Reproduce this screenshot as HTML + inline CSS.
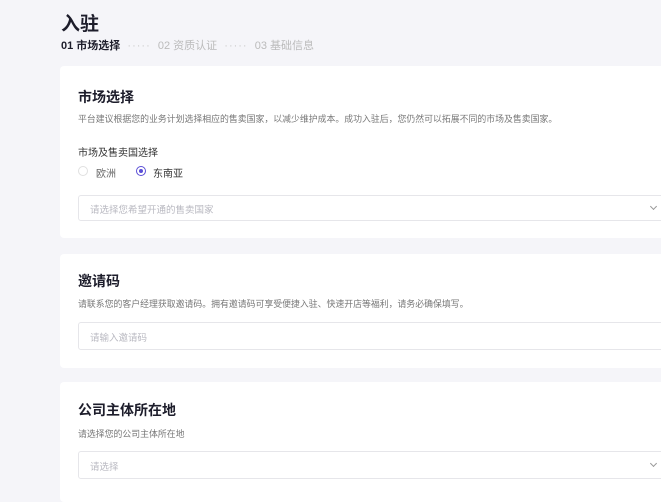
<!DOCTYPE html>
<html><head><meta charset="utf-8"><style>
body{margin:0;width:661px;height:488px;overflow:hidden;background:#f5f5f9;font-family:"Liberation Sans","Noto Sans CJK SC",sans-serif;position:relative}
.a{position:absolute;white-space:nowrap}
.card{position:absolute;left:60px;width:620px;background:#fff;border-radius:4px}
.h{font-size:14px;font-weight:bold;color:#1d1d2b}
.d{font-size:8.9px;color:#777}
.box{position:absolute;left:18px;width:600px;height:26px;border:1px solid #e6e6ea;border-radius:3px;box-sizing:border-box}
.ph{position:absolute;left:11px;top:6px;font-size:9.5px;color:#b8b8c0}
.chev{position:absolute;left:572px;top:8px;width:4px;height:4px;border-right:1px solid #999;border-bottom:1px solid #999;transform:rotate(45deg)}
</style></head><body>
<div class="a" style="left:61px;top:9px;font-size:19px;font-weight:bold;color:#1d1d2b">入驻</div>
<div class="a" style="left:61px;top:37px;font-size:11px;color:#1d1d2b;font-weight:bold">01 市场选择 <span style="color:#ccc;font-weight:normal;letter-spacing:1px">&nbsp;·····&nbsp;</span> <span style="color:#bbb;font-weight:normal">02 资质认证</span> <span style="color:#ccc;font-weight:normal;letter-spacing:1px">&nbsp;·····&nbsp;</span> <span style="color:#bbb;font-weight:normal">03 基础信息</span></div>

<div class="card" style="top:66px;height:172px">
<div class="a h" style="left:18px;top:21px">市场选择</div>
<div class="a d" style="left:18px;top:46px">平台建议根据您的业务计划选择相应的售卖国家，以减少维护成本。成功入驻后，您仍然可以拓展不同的市场及售卖国家。</div>
<div class="a" style="left:18px;top:78px;font-size:10px;color:#333">市场及售卖国选择</div>
<div class="a" style="left:18px;top:100px;width:10px;height:10px;border:1px solid #e0e0e0;border-radius:50%;box-sizing:border-box"></div>
<div class="a" style="left:36px;top:99px;font-size:10px;color:#666">欧洲</div>
<div class="a" style="left:76px;top:100px;width:10px;height:10px;border:1px solid #5b4fd6;border-radius:50%;box-sizing:border-box"><div style="position:absolute;left:2px;top:2px;width:4px;height:4px;border-radius:50%;background:#5b4fd6"></div></div>
<div class="a" style="left:93px;top:99px;font-size:10px;color:#333">东南亚</div>
<div class="box" style="top:129px"><div class="ph a">请选择您希望开通的售卖国家</div><div class="chev"></div></div>
</div>

<div class="card" style="top:254px;height:114px">
<div class="a h" style="left:18px;top:17px">邀请码</div>
<div class="a d" style="left:18px;top:43px">请联系您的客户经理获取邀请码。拥有邀请码可享受便捷入驻、快速开店等福利，请务必确保填写。</div>
<div class="box" style="top:68px;height:28px"><div class="ph a" style="top:7px">请输入邀请码</div></div>
</div>

<div class="card" style="top:382px;height:120px">
<div class="a h" style="left:18px;top:18px">公司主体所在地</div>
<div class="a d" style="left:18px;top:45px">请选择您的公司主体所在地</div>
<div class="box" style="top:69px;height:28px"><div class="ph a" style="top:7px">请选择</div><div class="chev" style="top:9px"></div></div>
</div>
</body></html>
